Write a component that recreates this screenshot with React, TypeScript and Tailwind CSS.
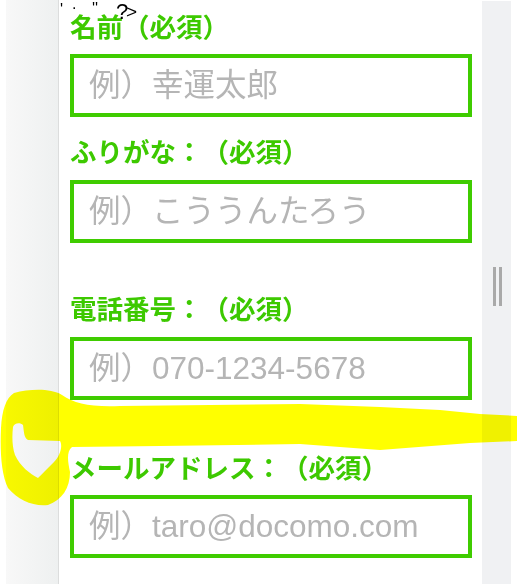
import React from 'react';

const jp = '"Noto Sans CJK JP", "Liberation Sans", sans-serif';
const latin = '"Liberation Sans", "Noto Sans CJK JP", sans-serif';

type FieldProps = {
  label: string;
  placeholder: string;
  labelClass: string;
};

const Field = ({ label, placeholder, labelClass }: FieldProps) => (
  <div className="flex flex-col">
    <label
      className={`block h-[30px] leading-[30px] text-[26.5px] font-bold text-[#3dc900] [text-spacing-trim:space-all] ${labelClass}`}
      style={{ fontFamily: jp }}
    >
      {label}
    </label>
    <input
      type="text"
      placeholder={placeholder}
      className="h-[63px] w-[402px] border-4 border-[#3fcc00] bg-white px-[15px] text-[31.5px] text-[#444] outline-none [text-spacing-trim:space-all] placeholder:text-[#b5b5b5]"
      style={{ fontFamily: latin }}
    />
  </div>
);

export default function App() {
  return (
    <div className="relative flex h-[584px] w-[517px] overflow-hidden bg-white">
      {/* left gutter */}
      <div className="w-[6px] bg-white" />
      <div className="w-[53px] border-r border-[#dcdddd] bg-gradient-to-r from-[#f8f8f8] to-[#eef0f0]" />

      {/* form panel */}
      <main className="w-[423px] bg-white pl-[11px] pr-[10px]">
        <Field label="名前（必須）" placeholder="例）幸運太郎" labelClass="mt-[11px] mb-[13px]" />
        <Field label="ふりがな：（必須）" placeholder="例）こううんたろう" labelClass="mt-[19px] mb-[14px]" />
        <Field label="電話番号：（必須）" placeholder="例）070-1234-5678" labelClass="mt-[50px] mb-[14px]" />
        <Field label="メールアドレス：（必須）" placeholder="例）taro@docomo.com" labelClass="mt-[52px] mb-[13px]" />
      </main>

      {/* right strip with drag handle */}
      <div className="mt-[1px] flex w-[29px] justify-center bg-[#f0f1f3] pt-[266px]">
        <div className="flex h-[39px] gap-[3px] pl-[2px]">
          <span className="w-[3px] bg-[#a9a9a9]" />
          <span className="w-[3px] bg-[#a9a9a9]" />
        </div>
      </div>
      <div className="w-[6px] bg-white" />

      {/* cut-off code remnants at the top */}
      <div
        className="pointer-events-none absolute left-0 top-0 h-[26px] w-[240px] leading-none text-black"
        style={{ fontFamily: latin }}
      >
        <span className="absolute left-[60px] top-[2px] text-[16px]">'</span>
        <span className="absolute left-[72px] top-[-4px] text-[16px]">.</span>
        <span className="absolute left-[92px] top-[1px] text-[16px]">''</span>
        <span className="absolute left-[116px] top-[1px] text-[22px]">?</span>
        <span className="absolute left-[126px] top-[2px] text-[19px]">&gt;</span>
        <span className="absolute left-[204px] top-[-7px] text-[16px]">´</span>
      </div>

      {/* yellow highlighter mark */}
      <svg
        className="pointer-events-none absolute left-0 top-0 mix-blend-multiply"
        width="517"
        height="584"
        viewBox="0 0 517 584"
      >
        <path
          fill="#ffff00"
          fillRule="evenodd"
          d="M14 393 C30 389 50 388 62 395 C75 404 90 407 120 406 L300 404 L380 407 L440 410 L480 414 L517 416 L517 441 L470 443 L380 450 L300 444 L160 446 L72 447 C66 452 68 462 70 472 C70 488 62 500 48 505 C34 507 18 500 8 488 C1 474 0 450 1 428 C2 410 6 398 14 393 Z
             M13 427 C14 423 20 422 23 425 C24 432 24 438 28 440 L60 441 C63 446 60 456 54 462 C48 468 42 474 38 478 C30 474 20 466 15 455 C12 446 12 436 13 427 Z"
        />
      </svg>
    </div>
  );
}
